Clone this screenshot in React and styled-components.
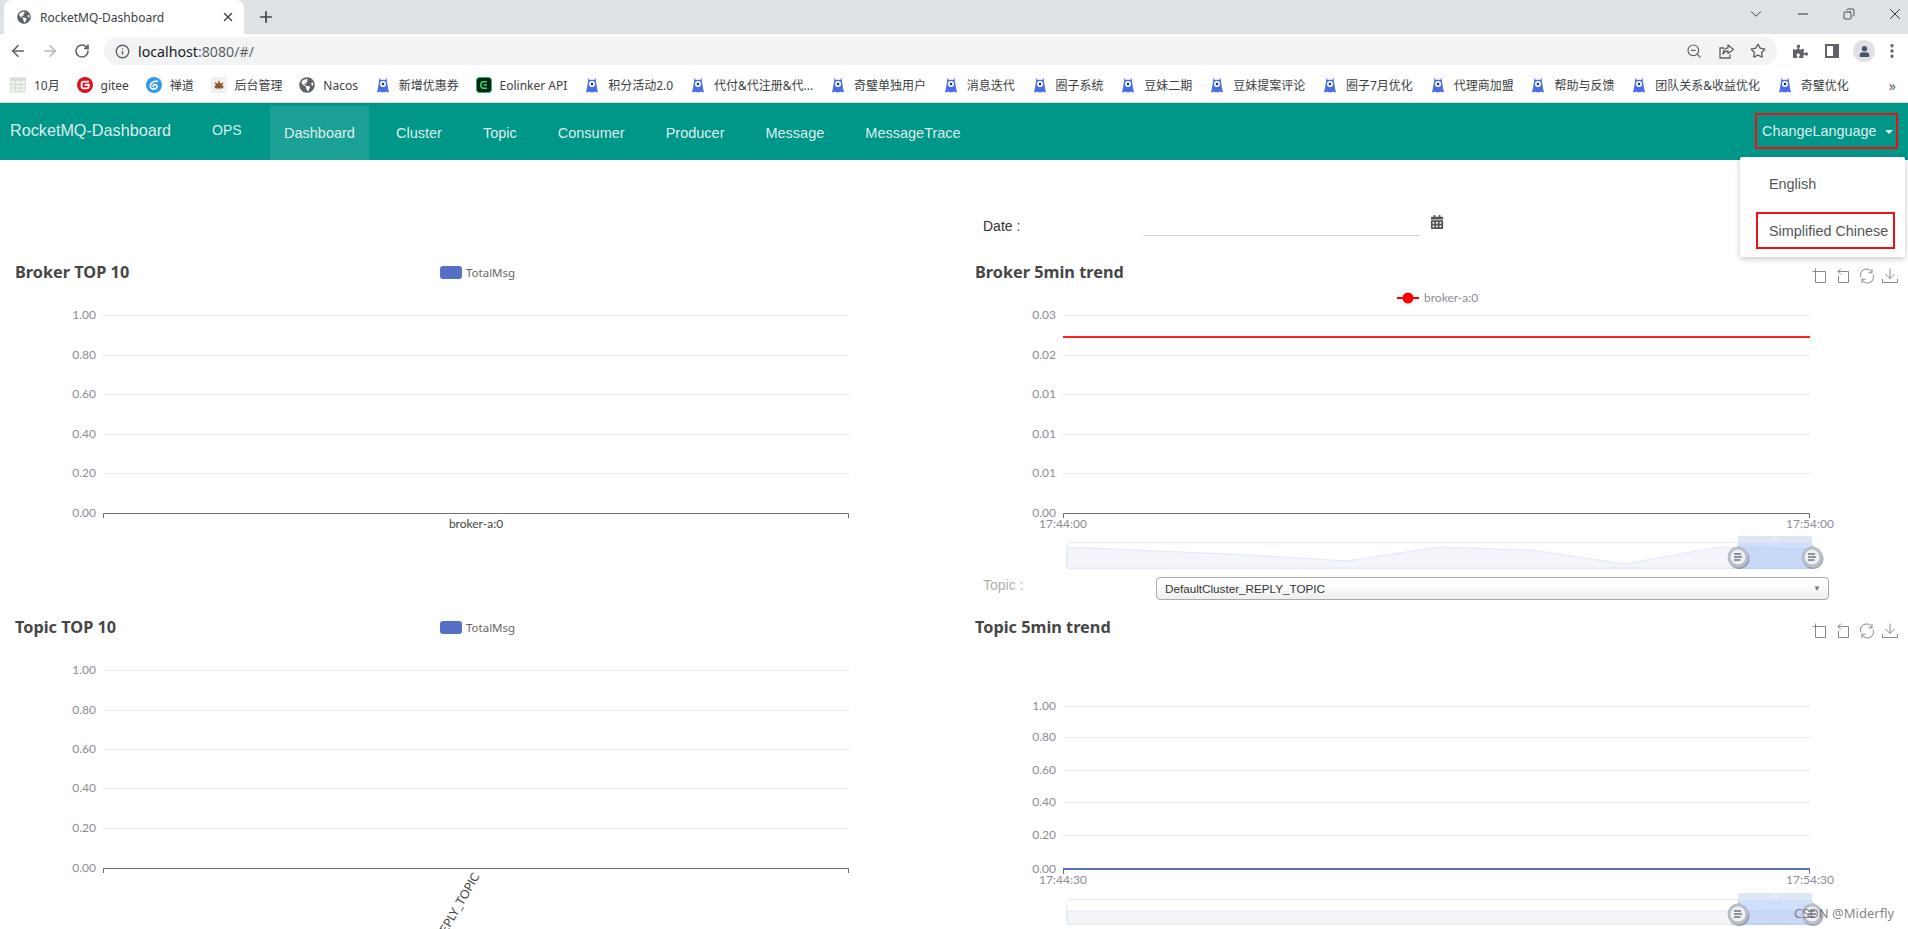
import React from 'react';
import styled, { createGlobalStyle } from 'styled-components';
import { ArrowLeft, ArrowRight, RotateCw, Info, ZoomOut, Star, X, Plus, ChevronDown, Minus, Copy, MoreVertical } from 'lucide-react';
import { FaGlobeAmericas, FaPuzzlePiece, FaCalendarAlt, FaUser } from 'react-icons/fa';

const UI_FONT = '"Noto Sans", "Noto Sans CJK SC", sans-serif';
const NAV_FONT = '"Liberation Sans", Arial, sans-serif';

const GlobalStyle = createGlobalStyle`
  html, body {
    margin: 0;
    height: 929px;
    overflow: hidden;
    background: #fff;
  }
  #root {
    height: 929px;
  }
`;

const bookmarks = [
  { label: '10月', icon: 'sheet' },
  { label: 'gitee', icon: 'gitee' },
  { label: '禅道', icon: 'zentao' },
  { label: '后台管理', icon: 'admin' },
  { label: 'Nacos', icon: 'globe' },
  { label: '新增优惠券' },
  { label: 'Eolinker API', icon: 'eolinker' },
  { label: '积分活动2.0' },
  { label: '代付&代注册&代...' },
  { label: '奇璧单独用户' },
  { label: '消息迭代' },
  { label: '圈子系统' },
  { label: '豆妹二期' },
  { label: '豆妹提案评论' },
  { label: '圈子7月优化' },
  { label: '代理商加盟' },
  { label: '帮助与反馈' },
  { label: '团队关系&收益优化' },
  { label: '奇璧优化' },
];

const navItems = ['Dashboard', 'Cluster', 'Topic', 'Consumer', 'Producer', 'Message', 'MessageTrace'];

const BookmarkIcon = ({ type }) => {
  if (type === 'sheet') {
    return (
      <svg width="16" height="16" viewBox="0 0 16 16">
        <rect x="0" y="1" width="16" height="14" fill="#eef2ec" stroke="#d5dbd3" />
        <rect x="0" y="1" width="16" height="3" fill="#d3e0d3" />
        <path d="M0 7.5H16M0 11H16M5.5 4V15M10.5 4V15" stroke="#d5dbd3" />
      </svg>
    );
  }
  if (type === 'gitee') {
    return (
      <svg width="16" height="16" viewBox="0 0 16 16">
        <circle cx="8" cy="8" r="8" fill="#d8121f" />
        <path d="M12 4.6H6.6C5.4 4.6 4.6 5.4 4.6 6.6V9.6C4.6 10.7 5.4 11.4 6.5 11.4H9.8C11 11.4 11.7 10.6 11.7 9.6V7.7H7.6" fill="none" stroke="#fff" strokeWidth="1.9" />
      </svg>
    );
  }
  if (type === 'zentao') {
    return (
      <svg width="16" height="16" viewBox="0 0 16 16">
        <circle cx="8" cy="8" r="8" fill="#2f9be8" />
        <path d="M12 4.5C8 3.5 4 6 4.3 9.5C4.6 12.5 9 13 10.8 10.6C12 8.8 10 7 8 7.8C6.8 8.3 7 9.8 8.2 9.9" fill="none" stroke="#fff" strokeWidth="1.6" />
      </svg>
    );
  }
  if (type === 'admin') {
    return (
      <svg width="16" height="16" viewBox="0 0 16 16">
        <rect width="16" height="16" fill="#f1f0ee" />
        <path d="M8 3L9.2 6.5L12.5 5.5L11 9H13L11.5 11.5H4.5L3 9H5L3.5 5.5L6.8 6.5Z" fill="#8a5a2b" />
      </svg>
    );
  }
  if (type === 'globe') {
    return <FaGlobeAmericas size={16} color="#5f6368" />;
  }
  if (type === 'eolinker') {
    return (
      <svg width="16" height="16" viewBox="0 0 16 16">
        <rect x="0.5" y="0.5" width="15" height="15" rx="3" fill="#0a1f14" stroke="#12c45a" />
        <path d="M11 4.8H7.2C5.8 4.8 4.8 6 4.8 8C4.8 10 5.8 11.2 7.2 11.2H11M7.5 8H11" fill="none" stroke="#1fe26c" strokeWidth="1.5" />
      </svg>
    );
  }
  return (
    <svg width="16" height="16" viewBox="0 0 16 16">
      <path d="M4.6 0.5L5.6 3C6.9 2.5 9.1 2.5 10.4 3L11.4 0.5L12 4.4C12.6 8 13 12 14 15C12.6 15.6 11.8 15 11 14.4C9.8 15.6 6.2 15.6 5 14.4C4.2 15 3.4 15.6 2 15C3 12 3.4 8 4 4.4Z" fill="#4a6ee8" />
      <circle cx="8" cy="7" r="3" fill="#fff" />
      <circle cx="8" cy="7" r="1.3" fill="#16307a" />
    </svg>
  );
};

const ShareGlyph = () => (
  <svg width="17" height="17" viewBox="0 0 17 17" fill="none" stroke="#5f6368" strokeWidth="1.3">
    <path d="M6 5H2V15H12V11.5" />
    <path d="M10 2L15.5 6.5L10 10.5V8C7.5 8 6 9 5 11C5 7.5 7 5 10 5Z" strokeLinejoin="round" />
  </svg>
);

const ToolboxIcons = () => (
  <Toolbox>
    <svg width="16" height="16" viewBox="0 0 16 16"><path d="M0.5 3.5H13.5V14.5H3.5V0.5" /></svg>
    <svg width="16" height="16" viewBox="0 0 16 16"><path d="M6 0.5L3 3.5L6 6.5M3 3.5H13.5V14.5H3.5V8" /></svg>
    <svg width="16" height="16" viewBox="0 0 16 16"><path d="M2 9.5A6 6 0 0 1 13 4.5M13 1V4.8H9.4M14 6.5A6 6 0 0 1 3 11.5M3 15V11.2H6.6" /></svg>
    <svg width="16" height="16" viewBox="0 0 16 16"><path d="M8 0.5V10.5M3.5 6L8 10.5L12.5 6M0.5 11V14.5H15.5V11" /></svg>
  </Toolbox>
);

// slider handle, sits on the edge of the selected range
const Handle = ({ x, y }) => (
  <g transform={`translate(${x} ${y})`}>
    <path d="M0 -14L-4 -10.5A11 11 0 1 0 4 -10.5Z" transform="translate(1 2) scale(0.95)" fill="#6f747e" opacity="0.6" />
    <circle r="10.5" fill="#b9bec8" />
    <circle r="7.5" fill="#eef0f4" />
    <path d="M-4 -3H3M-4 0H4M-4 3H2.5" stroke="#6f7580" strokeWidth="1.3" fill="none" />
  </g>
);

const ZoomSlider = ({ top, height, path }) => (
  <g>
    <rect x="106.5" y={top + 0.5} width="746" height={height} rx="3" fill="#fff" stroke="#e3eaf8" />
    <path d={path} fill="#f3f5fb" stroke="#e2e8f6" />
    <rect x="778" y={top + 1} width="74" height={height} fill="#87aff5" opacity="0.4" />
    <rect x="778" y={top - 6} width="74" height="7" fill="#dfe7f5" />
    <path d={`M813 ${top - 3}h4`} stroke="#fff" strokeWidth="1.5" strokeDasharray="1 0.6" />
    <Handle x={778} y={top + 15} />
    <Handle x={852} y={top + 15} />
  </g>
);

const AxisChart = ({ width, height, from, to, rows, children }) => {
  const axisY = rows[rows.length - 1].y;
  return (
    <ChartSvg width={width} height={height}>
      {rows.map((row, i) => (
        <g key={row.label + i}>
          <text x={from - 7} y={row.y + 4} textAnchor="end">{row.label}</text>
          {i < rows.length - 1 && <line x1={from} x2={to} y1={row.y + 0.5} y2={row.y + 0.5} stroke="#e7ebf3" />}
        </g>
      ))}
      <path d={`M${from + 0.5} ${axisY + 5}V${axisY + 0.5}H${to - 0.5}V${axisY + 5}`} stroke="#6e7079" fill="none" />
      {children}
    </ChartSvg>
  );
};

const ratioLabels = ['1.00', '0.80', '0.60', '0.40', '0.20', '0.00'];
const brokerRows = [27, 67, 106, 146, 185, 225].map((y, i) => ({ y, label: ratioLabels[i] }));
const trendRows = [27, 67, 106, 146, 185, 225].map((y, i) => ({ y, label: ['0.03', '0.02', '0.01', '0.01', '0.01', '0.00'][i] }));
const topicTopRows = [27, 67, 106, 145, 185, 225].map((y, i) => ({ y, label: ratioLabels[i] }));
const topicTrendRows = [63, 94, 127, 159, 192, 226].map((y, i) => ({ y, label: ratioLabels[i] }));

const App = () => (
  <Page>
    <GlobalStyle />
    <TabStrip>
      <Tab>
        <FaGlobeAmericas size={14} color="#5f6368" />
        <TabTitle>RocketMQ-Dashboard</TabTitle>
        <X size={14} color="#444" strokeWidth={2.4} />
      </Tab>
      <NewTab><Plus size={18} color="#3c4043" strokeWidth={2.2} /></NewTab>
      <WindowControls>
        <WindowButton $wide><ChevronDown size={18} color="#3c4043" strokeWidth={1.3} /></WindowButton>
        <WindowButton><Minus size={16} color="#222" strokeWidth={1.4} /></WindowButton>
        <WindowButton><Copy size={12} color="#222" strokeWidth={1.5} style={{ transform: 'scaleX(-1)' }} /></WindowButton>
        <WindowButton><X size={18} color="#222" strokeWidth={1.2} /></WindowButton>
      </WindowControls>
    </TabStrip>

    <Toolbar>
      <ToolSlot><ArrowLeft size={18} color="#5f6368" strokeWidth={2.2} /></ToolSlot>
      <ToolSlot><ArrowRight size={18} color="#b6b9bd" strokeWidth={2.2} /></ToolSlot>
      <ToolSlot><RotateCw size={16} color="#5f6368" strokeWidth={2.4} /></ToolSlot>
      <AddressBar>
        <Info size={15} color="#5f6368" strokeWidth={2.2} />
        <Url>localhost<UrlRest>:8080/#/</UrlRest></Url>
        <ToolSlot><ZoomOut size={16} color="#5f6368" strokeWidth={1.8} /></ToolSlot>
        <ToolSlot><ShareGlyph /></ToolSlot>
        <ToolSlot><Star size={16} color="#5f6368" strokeWidth={2} /></ToolSlot>
      </AddressBar>
      <ToolGroup>
        <ToolSlot><FaPuzzlePiece size={15} color="#5f6368" /></ToolSlot>
        <ToolSlot><SidePanel /></ToolSlot>
        <ToolSlot><Avatar><FaUser size={11} color="#4a5568" /></Avatar></ToolSlot>
        <ToolSlot $narrow><MoreVertical size={18} color="#5f6368" strokeWidth={2.4} /></ToolSlot>
      </ToolGroup>
    </Toolbar>

    <BookmarkBar>
      {bookmarks.map(item => (
        <Bookmark key={item.label}>
          <BookmarkIcon type={item.icon} />
          {item.label}
        </Bookmark>
      ))}
      <BookmarkMore>»</BookmarkMore>
    </BookmarkBar>

    <NavBar>
      <Brand>RocketMQ-Dashboard</Brand>
      <OpsLink>OPS</OpsLink>
      {navItems.map(item => (
        <NavItem key={item} $active={item === 'Dashboard'}>{item}</NavItem>
      ))}
      <LanguageToggle>ChangeLanguage<Caret /></LanguageToggle>
      <LanguageMenu>
        <LanguageOption>English</LanguageOption>
        <LanguageOption $boxed><Highlighted>Simplified Chinese</Highlighted></LanguageOption>
      </LanguageMenu>
    </NavBar>

    <Content>
      <LeftColumn>
        <ChartPanel>
          <PanelHeader>
            <PanelTitle $legendGap>Broker TOP 10</PanelTitle>
            <BarLegend><LegendSwatch />TotalMsg</BarLegend>
          </PanelHeader>
          <AxisChart width={960} height={323} from={103} to={849} rows={brokerRows}>
            <DarkLabel x="476" y="240" textAnchor="middle">broker-a:0</DarkLabel>
          </AxisChart>
        </ChartPanel>
        <ChartPanel>
          <PanelHeader>
            <PanelTitle $legendGap>Topic TOP 10</PanelTitle>
            <BarLegend><LegendSwatch />TotalMsg</BarLegend>
          </PanelHeader>
          <AxisChart width={960} height={290} from={103} to={849} rows={topicTopRows}>
            <DarkLabel textAnchor="end" transform="translate(480 233) rotate(-60)">DefaultCluster_REPLY_TOPIC</DarkLabel>
          </AxisChart>
        </ChartPanel>
      </LeftColumn>

      <RightColumn>
        <DateRow>
          <FieldLabel>Date :</FieldLabel>
          <DateInput />
          <CalendarSlot><FaCalendarAlt size={14} color="#555" /></CalendarSlot>
        </DateRow>
        <ChartPanel>
          <PanelHeader>
            <PanelTitle>Broker 5min trend</PanelTitle>
            <ToolboxIcons />
          </PanelHeader>
          <AxisChart width={948} height={282} from={103} to={850} rows={trendRows}>
            <line x1="437" x2="459" y1="10" y2="10" stroke="#f00" strokeWidth="2" />
            <circle cx="448" cy="10" r="5.5" fill="#f00" />
            <text x="464" y="14">broker-a:0</text>
            <line x1="103" x2="850" y1="49" y2="49" stroke="#f22" strokeWidth="2" />
            <text x="103" y="240" textAnchor="middle">17:44:00</text>
            <text x="850" y="240" textAnchor="middle">17:54:00</text>
            <ZoomSlider
              top={254}
              height={26}
              path="M107 259L290 267L387 273L478 259L571 262L665 276L759 259L852 261V280H107Z"
            />
          </AxisChart>
        </ChartPanel>
        <TopicRow>
          <FieldLabel $muted>Topic :</FieldLabel>
          <TopicSelect>DefaultCluster_REPLY_TOPIC<SelectArrow>▼</SelectArrow></TopicSelect>
        </TopicRow>
        <ChartPanel>
          <PanelHeader>
            <PanelTitle>Topic 5min trend</PanelTitle>
            <ToolboxIcons />
          </PanelHeader>
          <AxisChart width={948} height={286} from={103} to={850} rows={topicTrendRows}>
            <line x1="103" x2="850" y1="226" y2="226" stroke="#5470c6" strokeWidth="2" />
            <text x="103" y="241" textAnchor="middle">17:44:30</text>
            <text x="850" y="241" textAnchor="middle">17:54:30</text>
            <ZoomSlider top={256} height={25} path="M107 268H852V281H107Z" />
          </AxisChart>
        </ChartPanel>
      </RightColumn>
    </Content>
    <Watermark>CSDN @Miderfly</Watermark>
  </Page>
);

export default App;

const Page = styled.div`
  position: relative;
  width: 1908px;
  height: 929px;
  overflow: hidden;
  background: #fff;
`;

const TabStrip = styled.div`
  display: flex;
  align-items: flex-end;
  height: 34px;
  padding-left: 4px;
  background: #dee1e6;
`;

const Tab = styled.div`
  display: flex;
  align-items: center;
  gap: 9px;
  box-sizing: border-box;
  width: 240px;
  height: 34px;
  padding: 0 9px 0 13px;
  background: #fff;
  border-radius: 8px 8px 0 0;
`;

const TabTitle = styled.span`
  flex: 1;
  font: 12px ${UI_FONT};
  color: #3c4043;
`;

const NewTab = styled.div`
  display: flex;
  align-items: center;
  justify-content: center;
  width: 28px;
  height: 34px;
  margin-left: 8px;
`;

const WindowControls = styled.div`
  display: flex;
  margin-left: auto;
  margin-right: -10px;
`;

const WindowButton = styled.div`
  display: flex;
  align-items: center;
  justify-content: center;
  width: ${props => (props.$wide ? '48px' : '46px')};
  height: 28px;
  margin-bottom: 6px;
`;

const Toolbar = styled.div`
  display: flex;
  align-items: center;
  height: 34px;
  padding-left: 2px;
  background: #fff;
`;

const ToolSlot = styled.div`
  display: flex;
  align-items: center;
  justify-content: center;
  flex: none;
  width: ${props => (props.$narrow ? '24px' : '32px')};
  height: 28px;
`;

const AddressBar = styled.div`
  display: flex;
  align-items: center;
  box-sizing: border-box;
  width: 1673px;
  height: 28px;
  margin-left: 6px;
  padding: 0 3px 0 11px;
  background: #f1f3f4;
  border-radius: 14px;
`;

const Url = styled.span`
  flex: 1;
  margin-left: 8px;
  font: 14.2px ${UI_FONT};
  color: #202124;
`;

const UrlRest = styled.span`
  color: #5f6368;
`;

const ToolGroup = styled.div`
  display: flex;
  margin-left: 7px;
`;

const SidePanel = styled.div`
  box-sizing: border-box;
  width: 14px;
  height: 14px;
  border: 2px solid #5f6368;
  border-right-width: 6px;
`;

const Avatar = styled.div`
  display: flex;
  align-items: center;
  justify-content: center;
  width: 22px;
  height: 22px;
  border-radius: 50%;
  background: #dfe1e5;
`;

const BookmarkBar = styled.div`
  display: flex;
  align-items: center;
  gap: 16.8px;
  height: 34px;
  padding-left: 10px;
  background: #fff;
  border-bottom: 1px solid #dadce0;
`;

const Bookmark = styled.div`
  display: flex;
  align-items: center;
  gap: 8px;
  flex: none;
  font: 12px ${UI_FONT};
  color: #3c4043;
  white-space: nowrap;
`;

const BookmarkMore = styled.span`
  margin-left: auto;
  margin-right: 12px;
  font: 14px ${UI_FONT};
  color: #5f6368;
`;

const NavBar = styled.nav`
  position: relative;
  display: flex;
  align-items: flex-start;
  height: 57px;
  padding-left: 10px;
  background: #009688;
  font-family: ${NAV_FONT};
`;

const Brand = styled.div`
  width: 160px;
  margin-right: 42px;
  font-size: 16.2px;
  line-height: 54px;
  color: rgba(255, 255, 255, 0.87);
  white-space: nowrap;
`;

const OpsLink = styled.div`
  width: 30px;
  margin-right: 28px;
  font-size: 14px;
  line-height: 54px;
  color: rgba(255, 255, 255, 0.87);
`;

const NavItem = styled.div`
  height: 54px;
  margin: 3px 13px 0 0;
  padding: 0 14px;
  font-size: 14.5px;
  line-height: 54px;
  color: rgba(255, 255, 255, 0.87);
  background: ${props => (props.$active ? 'rgba(255, 255, 255, 0.1)' : 'transparent')};
`;

const LanguageToggle = styled.div`
  display: flex;
  align-items: center;
  gap: 9px;
  box-sizing: border-box;
  width: 143px;
  height: 36px;
  margin: 10px 10px 0 auto;
  padding-left: 5px;
  font-size: 14.4px;
  color: rgba(255, 255, 255, 0.87);
  border: 2px solid #ee1018;
  white-space: nowrap;
`;

const Caret = styled.span`
  width: 0;
  height: 0;
  margin-top: 2px;
  border-top: 4px solid rgba(255, 255, 255, 0.87);
  border-left: 4px solid transparent;
  border-right: 4px solid transparent;
`;

const LanguageMenu = styled.div`
  position: absolute;
  top: 54px;
  right: 3px;
  z-index: 5;
  box-sizing: border-box;
  width: 165px;
  height: 100px;
  padding: 3px 0 0 16px;
  background: #fff;
  box-shadow: 0 2px 6px rgba(0, 0, 0, 0.22);
  border-radius: 2px;
`;

const LanguageOption = styled.div`
  display: flex;
  align-items: center;
  height: 47px;
  padding-left: ${props => (props.$boxed ? '0' : '13px')};
  font-size: 14.4px;
  color: #555;
`;

const Highlighted = styled.span`
  display: flex;
  align-items: center;
  box-sizing: border-box;
  height: 37px;
  width: 139px;
  padding-left: 11px;
  border: 2px solid #ee1018;
  white-space: nowrap;
`;

const Content = styled.main`
  display: grid;
  grid-template-columns: 960px 948px;
  height: 769px;
`;

const LeftColumn = styled.div`
  padding-top: 96px;
`;

const RightColumn = styled.div``;

const DateRow = styled.div`
  display: flex;
  align-items: flex-end;
  box-sizing: border-box;
  height: 96px;
  padding: 0 0 20px 23px;
`;

const FieldLabel = styled.div`
  flex: none;
  width: ${props => (props.$muted ? '173px' : '160px')};
  font: 14px/${props => (props.$muted ? '17px' : '19px')} ${NAV_FONT};
  color: ${props => (props.$muted ? '#b3b0aa' : '#333')};
`;

const DateInput = styled.div`
  box-sizing: border-box;
  width: 277px;
  height: 24px;
  border-bottom: 1px solid #d4d6da;
`;

const CalendarSlot = styled.div`
  display: flex;
  margin: 0 0 7px 10px;
`;

const ChartPanel = styled.section`
  display: block;
`;

const PanelHeader = styled.header`
  display: flex;
  justify-content: space-between;
  align-items: center;
  box-sizing: border-box;
  height: 32px;
  padding: 0 10px 0 15px;
`;

const PanelTitle = styled.h3`
  flex: none;
  width: ${props => (props.$legendGap ? '425px' : 'auto')};
  margin: 0;
  font: bold 16.3px ${UI_FONT};
  color: #464646;
`;

const BarLegend = styled.div`
  display: flex;
  align-items: center;
  gap: 4px;
  flex: 1;
  font: 11.5px ${UI_FONT};
  color: #666;
`;

const LegendSwatch = styled.span`
  width: 22px;
  height: 13px;
  background: #5470c6;
  border-radius: 3px;
`;

const Toolbox = styled.div`
  display: flex;
  gap: 7.5px;
  margin-top: 7px;
  svg {
    fill: none;
    stroke: #888;
    stroke-width: 1;
  }
`;

const ChartSvg = styled.svg`
  display: block;
  overflow: hidden;
  text {
    font: 12px Lato, "Noto Sans", sans-serif;
    fill: #8b8d94;
  }
`;

const DarkLabel = styled.text`
  && {
    fill: #444;
  }
`;

const TopicRow = styled.div`
  display: flex;
  align-items: flex-start;
  box-sizing: border-box;
  height: 41px;
  padding: 7px 0 0 23px;
`;

const TopicSelect = styled.div`
  display: flex;
  justify-content: space-between;
  align-items: center;
  box-sizing: border-box;
  width: 673px;
  height: 23px;
  padding: 0 7px 0 8px;
  font: 11.7px ${NAV_FONT};
  color: #333;
  background: linear-gradient(#fff 30%, #eee);
  border: 1px solid #aaa;
  border-radius: 4px;
`;

const SelectArrow = styled.span`
  font-size: 8px;
  color: #777;
`;

const Watermark = styled.div`
  position: absolute;
  left: 1794px;
  top: 904px;
  font: 13px/18px ${UI_FONT};
  color: rgba(90, 90, 90, 0.75);
`;
